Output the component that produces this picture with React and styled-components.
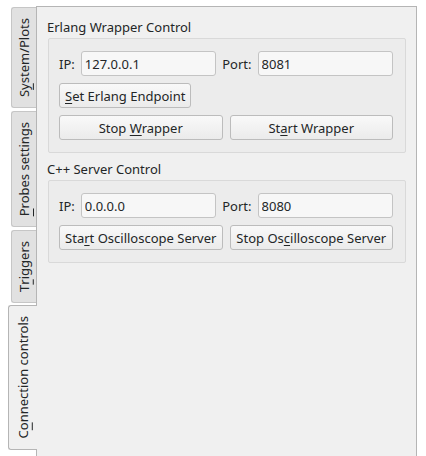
import styled, { createGlobalStyle } from "styled-components";

const Global = createGlobalStyle`
  html, body {
    margin: 0;
    background: #ffffff;
    overflow: hidden;
  }
  body {
    font-family: "Noto Sans", "Open Sans", sans-serif;
    font-size: 13px;
    color: #232627;
  }
`;

const Window = styled.div`
  display: flex;
  padding: 6px 0 0 8px;
  height: 456px;
  box-sizing: border-box;
`;

const TabBar = styled.div`
  display: flex;
  flex-direction: column;
  align-items: flex-end;
  width: 28px;
  padding-top: 1px;
  gap: 3px;
`;

const Tab = styled.div`
  display: flex;
  align-items: center;
  justify-content: center;
  box-sizing: border-box;
  width: ${(p) => (p.$active ? "29px" : "25px")};
  margin-right: ${(p) => (p.$active ? "-1px" : "0")};
  margin-top: ${(p) => (p.$active ? "-1px" : "0")};
  padding: 10px 0;
  background: ${(p) => (p.$active ? "#f0f0f0" : "#e1e1e1")};
  border: 1px solid ${(p) => (p.$active ? "#b5b5b5" : "#c6c6c6")};
  border-right: none;
  border-radius: 3px 0 0 3px;
  position: relative;
  z-index: ${(p) => (p.$active ? 2 : 0)};
`;

const TabLabel = styled.span`
  writing-mode: vertical-rl;
  transform: rotate(180deg);
  white-space: nowrap;
  line-height: 18px;
`;

const Mn = styled.span`
  text-decoration: underline;
  text-underline-offset: 2px;
`;

const Pane = styled.div`
  width: 381px;
  height: 470px;
  box-sizing: border-box;
  background: #f0f0f0;
  border: 1px solid #b5b5b5;
  padding: 11px 10px 0 10px;
  display: flex;
  flex-direction: column;
`;

const GroupTitle = styled.div`
  line-height: 18px;
  height: 18px;
  margin-bottom: 2px;
`;

const GroupBox = styled.div`
  margin-left: 1px;
  border: 1px solid #d9d9d9;
  border-radius: 2px;
  background: #ececec;
  padding: 12px 12px 12px 10px;
  display: flex;
  flex-direction: column;
  gap: 7px;
  margin-bottom: 7px;
`;

const FieldRow = styled.div`
  display: grid;
  grid-template-columns: auto 1fr auto 1fr;
  align-items: center;
  column-gap: 6px;
`;

const Label = styled.span`
  line-height: 18px;
`;

const Input = styled.input`
  height: 25px;
  box-sizing: border-box;
  min-width: 0;
  border: 1px solid #c4c4c4;
  border-radius: 3px;
  background: #f7f7f7;
  padding: 0 3px;
  font-family: inherit;
  font-size: 13px;
  color: #232627;
  outline: none;
`;

const ButtonRow = styled.div`
  display: grid;
  grid-template-columns: ${(p) => (p.$single ? "auto" : "1fr 1fr")};
  justify-content: start;
  column-gap: 7px;
`;

const Button = styled.button`
  height: 25px;
  box-sizing: border-box;
  border: 1px solid #bcbcbc;
  border-radius: 3px;
  background: linear-gradient(#f9f9f9, #ebebeb);
  padding: 0 5px;
  font-family: inherit;
  font-size: 13px;
  color: #232627;
  white-space: nowrap;
`;

const Group = ({ title, ip, port, children }) => (
  <>
    <GroupTitle>{title}</GroupTitle>
    <GroupBox>
      <FieldRow>
        <Label>IP:</Label>
        <Input defaultValue={ip} />
        <Label>Port:</Label>
        <Input defaultValue={port} />
      </FieldRow>
      {children}
    </GroupBox>
  </>
);

export default function App() {
  return (
    <>
      <Global />
      <Window>
        <TabBar>
          <Tab>
            <TabLabel>
              S<Mn>y</Mn>stem/Plots
            </TabLabel>
          </Tab>
          <Tab>
            <TabLabel>
              <Mn>P</Mn>robes settings
            </TabLabel>
          </Tab>
          <Tab>
            <TabLabel>
              T<Mn>r</Mn>iggers
            </TabLabel>
          </Tab>
          <Tab $active>
            <TabLabel>
              C<Mn>o</Mn>nnection controls
            </TabLabel>
          </Tab>
        </TabBar>
        <Pane>
          <Group title="Erlang Wrapper Control" ip="127.0.0.1" port="8081">
            <ButtonRow $single>
              <Button>
                <Mn>S</Mn>et Erlang Endpoint
              </Button>
            </ButtonRow>
            <ButtonRow>
              <Button>
                Stop <Mn>W</Mn>rapper
              </Button>
              <Button>
                St<Mn>a</Mn>rt Wrapper
              </Button>
            </ButtonRow>
          </Group>
          <Group title="C++ Server Control" ip="0.0.0.0" port="8080">
            <ButtonRow>
              <Button>
                Sta<Mn>r</Mn>t Oscilloscope Server
              </Button>
              <Button>
                Stop Os<Mn>c</Mn>illoscope Server
              </Button>
            </ButtonRow>
          </Group>
        </Pane>
      </Window>
    </>
  );
}
